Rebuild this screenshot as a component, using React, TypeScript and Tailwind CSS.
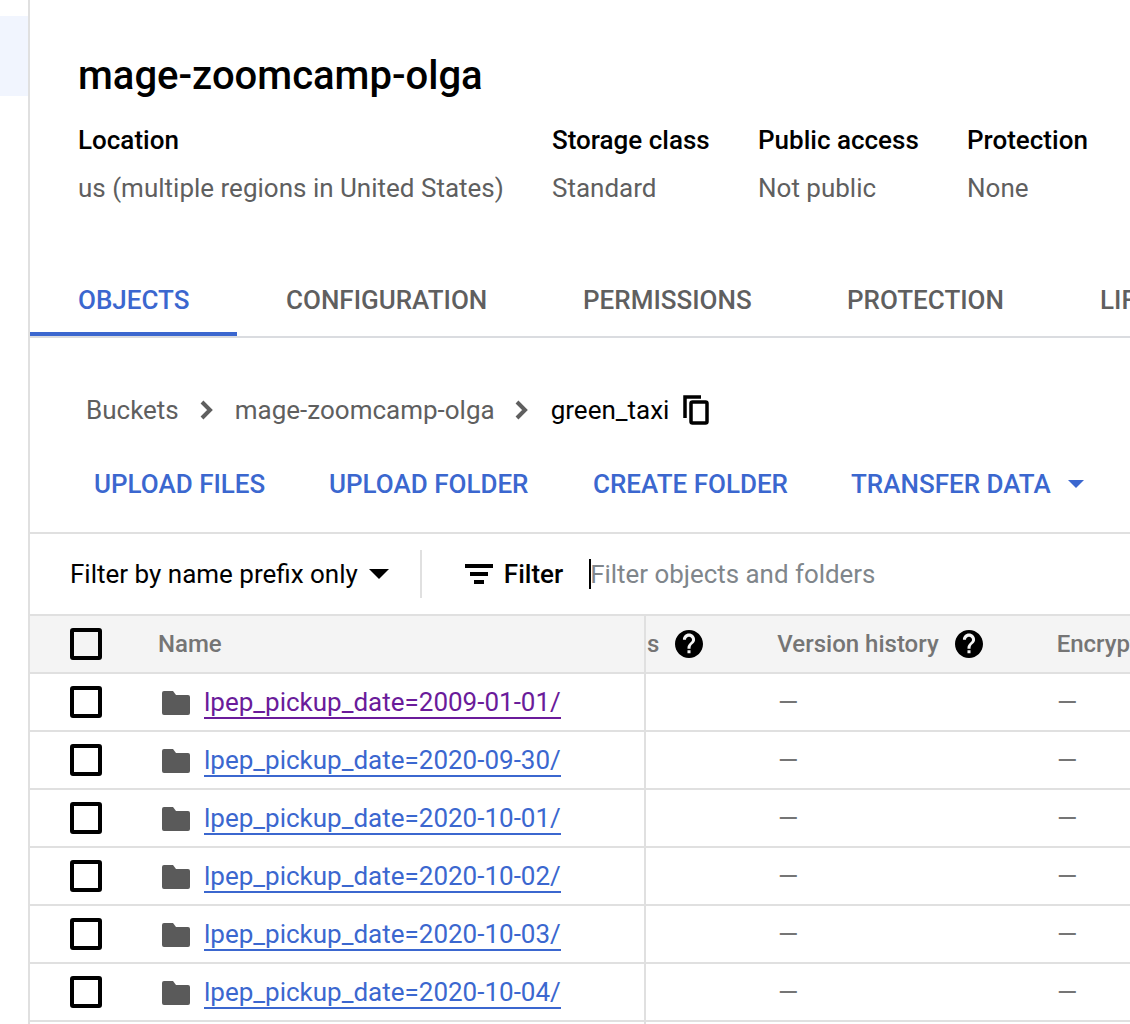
const rows = ['2009-01-01', '2020-09-30', '2020-10-01', '2020-10-02', '2020-10-03', '2020-10-04'];

function Checkbox() {
  return <div className="w-[32px] h-[32px] rounded-[3px] border-[4px] border-black shrink-0" />;
}

function Help() {
  return (
    <svg width="28" height="28" viewBox="0 0 24 24" className="shrink-0">
      <path fill="#000" d="M12 0C5.370 0 0 5.370 0 12s5.370 12 12 12 12-5.370 12-12S18.630 0 12 0zm1.300 20h-2.600v-2.600h2.600V20zm2.700-8.900-1.200 1.200c-1 1-1.500 1.800-1.500 3.700h-2.600v-.6c0-1.400.5-2.700 1.500-3.700l1.600-1.600c.5-.5.8-1.100.8-1.800 0-1.400-1.200-2.600-2.600-2.600S9.400 6.900 9.400 8.300H6.800C6.800 5.400 9.100 3.100 12 3.100s5.200 2.300 5.200 5.200c0 1.100-.5 2.100-1.200 2.800z" />
    </svg>
  );
}

function Chevron() {
  return (
    <svg width="14" height="22" viewBox="0 0 14 22" className="shrink-0">
      <path d="M3 3l8 8-8 8" fill="none" stroke="#5f5f5f" strokeWidth="4" />
    </svg>
  );
}

function Meta({ label, value, className }: { label: string; value: string; className: string }) {
  return (
    <div className={className}>
      <div className="text-[26px] leading-[32px] font-medium text-black whitespace-nowrap">{label}</div>
      <div className="text-[26px] leading-[32px] mt-[16px] text-[#5f5f5f] whitespace-nowrap">{value}</div>
    </div>
  );
}

function Row({ date, visited }: { date: string; visited?: boolean }) {
  return (
    <div className="flex h-[58px] border-b-2 border-[#e0e0e0] items-center">
      <div className="w-[616px] h-full border-r-2 border-[#e0e0e0] flex items-center pl-[40px] shrink-0">
        <Checkbox />
        <svg width="28" height="24" viewBox="0 0 28 24" className="ml-[60px] shrink-0 mt-[2px]">
          <path fill="#5a5a5a" d="M2 0h9l3 4h12a2 2 0 0 1 2 2v16a2 2 0 0 1-2 2H2a2 2 0 0 1-2-2V2a2 2 0 0 1 2-2z" />
        </svg>
        <a className={`ml-[14px] mt-[2px] text-[26px] leading-[29px] whitespace-nowrap border-b-2 ${visited ? 'text-[#6a1b9a] border-[#6a1b9a]' : 'text-[#3b67cf] border-[#3b67cf]'}`}>
          lpep_pickup_date={date}/
        </a>
      </div>
      <div className="w-[411px] text-[26px] leading-[32px] text-[#757575] pl-[132px] shrink-0">—</div>
      <div className="text-[26px] leading-[32px] text-[#757575]">—</div>
    </div>
  );
}

export default function App() {
  return (
    <div className="w-[1130px] h-[1024px] overflow-hidden flex bg-white font-['Roboto',sans-serif]">
      <aside className="w-[30px] shrink-0 border-r-2 border-[#e0e0e0] pt-[16px]">
        <div className="h-[80px] bg-[#f1f5fe]" />
      </aside>
      <main className="flex-1 min-w-0 overflow-hidden">
        <h1 className="text-[40px] leading-[44px] font-medium text-black pl-[48px] pt-[54px] box-content whitespace-nowrap">mage-zoomcamp-olga</h1>
        <div className="flex pl-[48px] mt-[26px]">
          <Meta label="Location" value="us (multiple regions in United States)" className="w-[474px] shrink-0" />
          <Meta label="Storage class" value="Standard" className="w-[206px] shrink-0" />
          <Meta label="Public access" value="Not public" className="w-[209px] shrink-0" />
          <Meta label="Protection" value="None" className="shrink-0" />
        </div>

        <nav className="flex h-[78px] mt-[56px] border-b-2 border-[#dadce0] text-[26px] leading-[32px] font-medium text-[#5f5f5f] whitespace-nowrap">
          <div className="w-[207px] shrink-0 border-b-4 border-[#3b67cf] h-[76px] text-[#3b67cf] pl-[48px] pt-[24px]">OBJECTS</div>
          <div className="pl-[49px] pt-[24px] shrink-0 w-[346px]">CONFIGURATION</div>
          <div className="pt-[24px] shrink-0 w-[264px]">PERMISSIONS</div>
          <div className="pt-[24px] shrink-0 w-[253px]">PROTECTION</div>
          <div className="pt-[24px] shrink-0">LIFECYCLE</div>
        </nav>

        <div className="flex items-center pl-[56px] mt-[55px] h-[34px] text-[26px] whitespace-nowrap">
          <span className="text-[#5f5f5f]">Buckets</span>
          <span className="ml-[20px]"><Chevron /></span>
          <span className="ml-[22px] text-[#5f5f5f]">mage-zoomcamp-olga</span>
          <span className="ml-[19px]"><Chevron /></span>
          <span className="ml-[23px] text-black">green_taxi</span>
          <svg width="28" height="30" viewBox="0 0 28 30" className="ml-[14px] shrink-0">
            <path fill="none" stroke="#000" strokeWidth="3.500" d="M2 23V2h16" />
            <rect x="8" y="7" width="16" height="21" rx="1.500" fill="none" stroke="#000" strokeWidth="3.500" />
          </svg>
        </div>

        <div className="flex pl-[64px] mt-[40px] h-[34px] items-center text-[26px] font-medium text-[#3b67cf] whitespace-nowrap">
          <span className="w-[235px] shrink-0">UPLOAD FILES</span>
          <span className="w-[264px] shrink-0">UPLOAD FOLDER</span>
          <span className="w-[258px] shrink-0">CREATE FOLDER</span>
          <span className="shrink-0">TRANSFER DATA</span>
          <span className="ml-[17px] w-0 h-0 border-x-[8px] border-x-transparent border-t-[8px] border-t-[#3b67cf] shrink-0" />
        </div>

        <div className="mt-[31px] border-t-2 border-[#e0e0e0] h-[82px] flex items-center pl-[40px] text-[26px] whitespace-nowrap">
          <span className="text-black">Filter by name prefix only</span>
          <span className="ml-[11px] w-0 h-0 border-x-[10px] border-x-transparent border-t-[10px] border-t-black shrink-0" />
          <span className="ml-[31px] w-[2px] h-[48px] bg-[#e0e0e0] shrink-0" />
          <svg width="28" height="20" viewBox="0 0 28 20" className="ml-[43px] shrink-0">
            <path fill="#000" d="M0 0h28v4H0zM5 8h18v4H5zM9 16h10v4H9z" />
          </svg>
          <span className="ml-[11px] font-medium text-black">Filter</span>
          <span className="ml-[26px] w-[2px] h-[30px] bg-black shrink-0" />
          <span className="-ml-[1px] text-[#80868b] text-[25.900px]">Filter objects and folders</span>
        </div>

        <div className="flex h-[60px] bg-[#f4f4f4] border-y-2 border-[#e0e0e0] items-center text-[24px] font-medium text-[#757575] whitespace-nowrap">
          <div className="w-[616px] h-full border-r-2 border-[#e0e0e0] flex items-center pl-[40px] shrink-0">
            <Checkbox />
            <span className="ml-[56px]">Name</span>
          </div>
          <span className="pl-[1px] shrink-0">s</span>
          <span className="ml-[16px]"><Help /></span>
          <span className="ml-[74px] shrink-0">Version history</span>
          <span className="ml-[16px]"><Help /></span>
          <span className="ml-[74px] shrink-0">Encryption</span>
        </div>

        {rows.map((d, i) => <Row key={d} date={d} visited={i === 0} />)}
        <div className="w-[616px] h-[10px] border-r-2 border-[#e0e0e0]" />
      </main>
    </div>
  );
}
